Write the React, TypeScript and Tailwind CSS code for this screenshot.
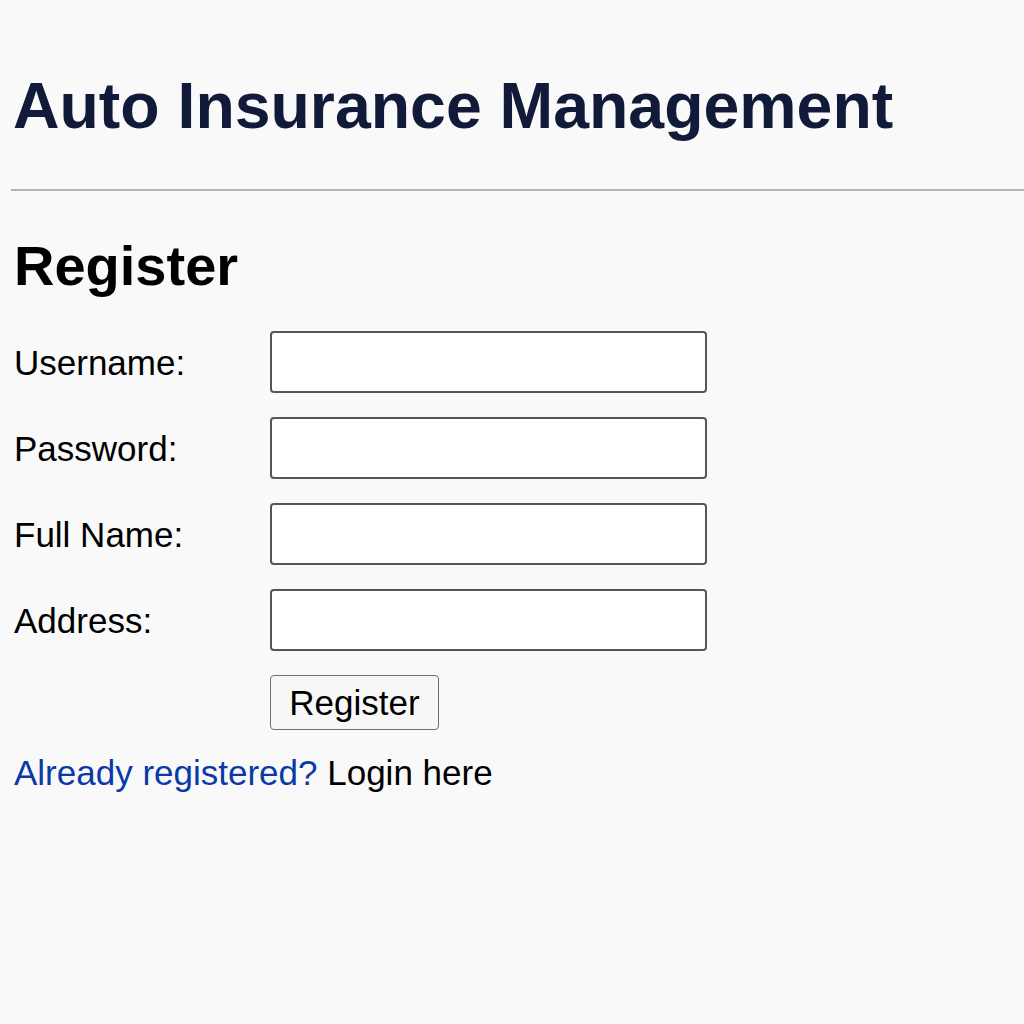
import React from 'react';

const fields = ['Username:', 'Password:', 'Full Name:', 'Address:'];

export default function App() {
  return (
    <div className="min-h-screen bg-[#f9f9f9] pl-[11px] pt-[74px] font-['Liberation_Sans',Arial,sans-serif] text-black">
      <h1 className="pl-[2px] text-[64.4px] font-bold leading-none text-[#111b39]">
        Auto Insurance Management
      </h1>
      <hr className="mt-[51px] border-0 h-[2px] bg-[#b4b4b4]" />
      <h2 className="mt-[47px] pl-[3px] text-[56px] font-bold leading-none">Register</h2>

      <form className="mt-[37px] pl-[3px] flex flex-col gap-[24px]" onSubmit={(e) => e.preventDefault()}>
        {fields.map((label) => (
          <div key={label} className="flex items-center">
            <label className="w-[256px] text-[35px] leading-none">{label}</label>
            <input
              type="text"
              className="w-[437px] h-[62px] bg-white border-2 border-[#555] rounded-[4px] px-2 text-[30px] outline-none"
            />
          </div>
        ))}
        <div className="flex">
          <div className="w-[256px]" />
          <button
            type="submit"
            className="w-[169px] h-[55px] bg-[#f7f7f7] border border-[#6e6e6e] rounded-[4px] text-[35px] leading-none"
          >
            Register
          </button>
        </div>
      </form>

      <p className="mt-[25px] pl-[3px] text-[35px] leading-none">
        <a href="#" className="text-[#0a3aa8]">Already registered?</a> Login here
      </p>
    </div>
  );
}
